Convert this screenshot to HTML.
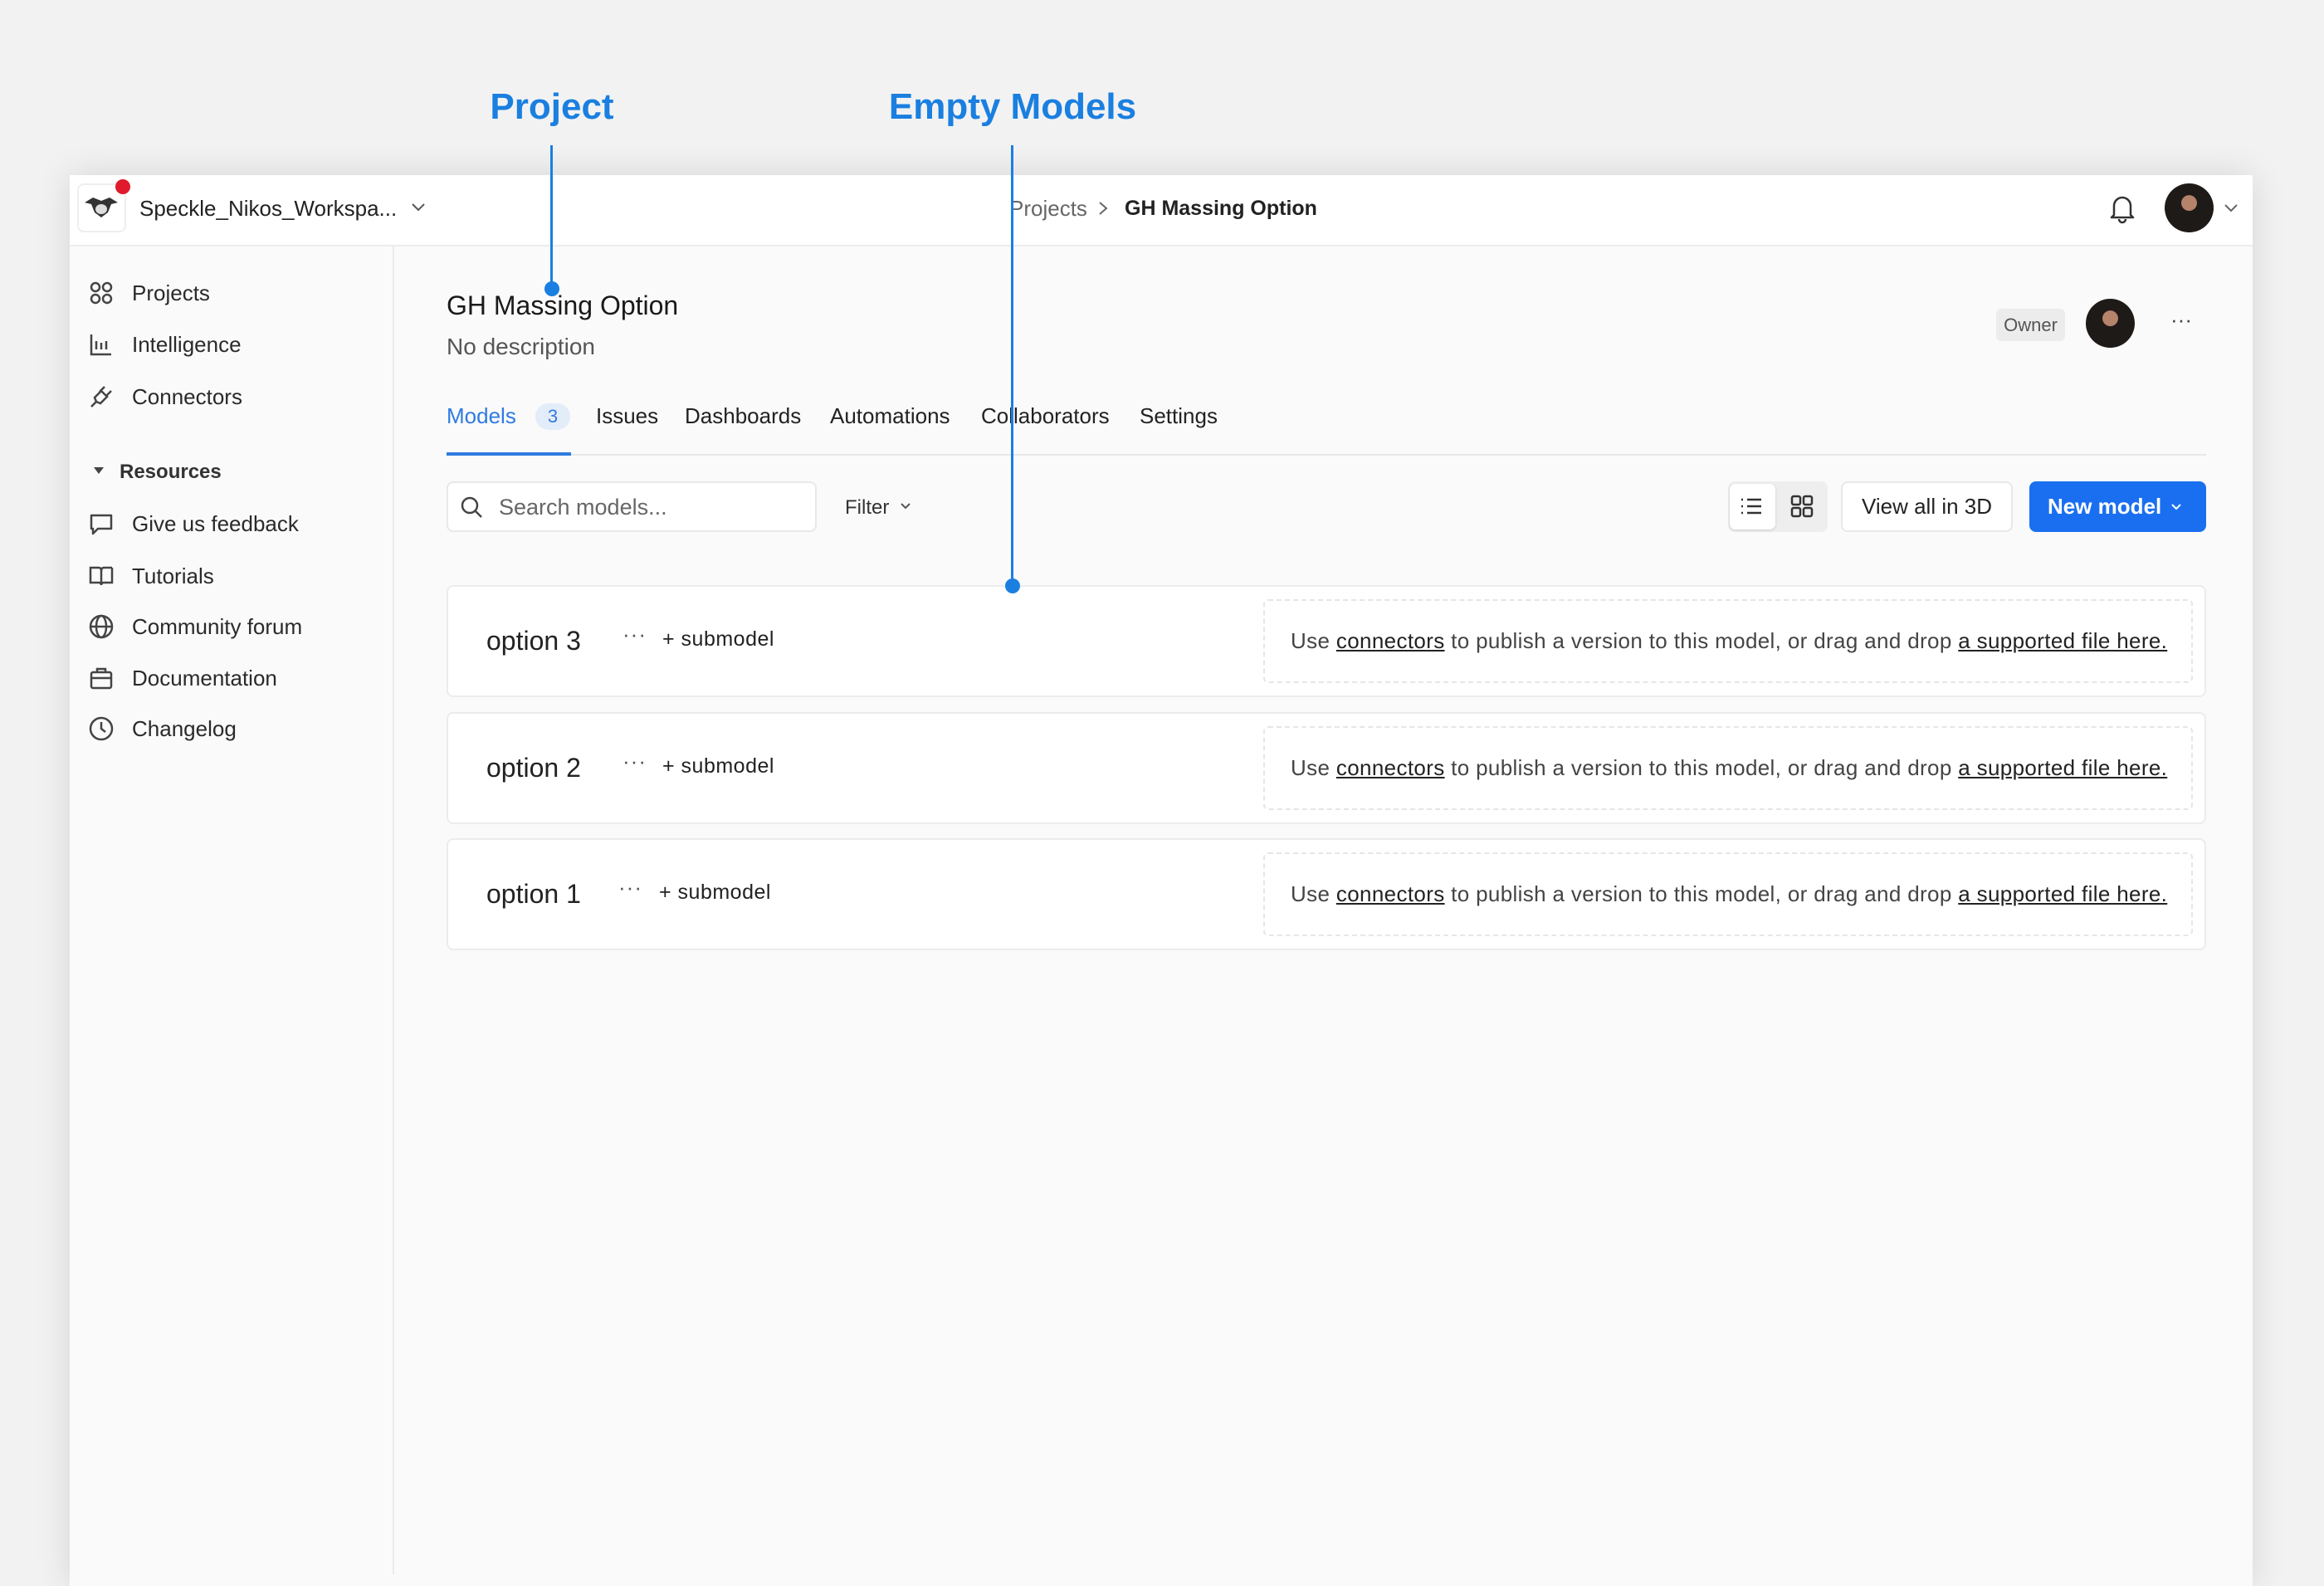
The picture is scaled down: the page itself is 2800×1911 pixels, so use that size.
<!DOCTYPE html>
<html><head><meta charset="utf-8"><style>
*{box-sizing:border-box;margin:0;padding:0}
body{width:2800px;height:1867px;background:#f2f2f2;font-family:"Liberation Sans",sans-serif;position:relative;overflow:hidden;color:#1a1a1a}
.abs{position:absolute}
.win{left:84px;top:211px;width:2630px;height:1700px;background:#fafafa;box-shadow:0 0 40px rgba(0,0,0,.12)}
.hdr{left:84px;top:211px;width:2630px;height:86px;background:#fff;border-bottom:2px solid #ececec}
.side{left:84px;top:297px;width:391px;height:1600px;border-right:2px solid #ececec;background:#fafafa}
.ann{font-size:44px;font-weight:bold;color:#1a7fe0;transform:translateX(-50%);z-index:5}
.vline{width:3px;background:#1a7fe0;z-index:5}
.dot{width:18px;height:18px;border-radius:50%;background:#1a7fe0;z-index:5}
.si{font-size:26px;color:#2a2a2a;left:159px}
.ic{left:106px;width:32px;height:32px}
.tab{font-size:26px;color:#222;top:486px}
.row{left:538px;width:2120px;height:135px;background:#fff;border:2px solid #ececec;border-radius:8px}
.opt{position:absolute;left:46px;font-size:32px;color:#222;top:47px}
.dots{position:absolute;left:210px;top:42px;font-size:26px;color:#555;letter-spacing:1px}
.sub{position:absolute;left:258px;top:49px;font-size:25px;color:#222;letter-spacing:.5px}
.dash{position:absolute;left:982px;top:15px;width:1120px;height:101px;border:2px dashed #e6e6e6;border-radius:6px;font-size:26px;color:#444;line-height:97px;padding-left:31px;letter-spacing:.35px;white-space:nowrap}
.dash u{color:#222}
.av{border-radius:50%;background:radial-gradient(circle at 50% 40%,#b5826a 0 20%,#1e1a18 21% 100%);overflow:hidden}
.av::after{content:"";position:absolute;left:0;top:0;right:0;height:45%;background:transparent}
</style></head><body>
<div class="abs win"></div>
<div class="abs hdr"></div>
<div class="abs side"></div>

<!-- annotations -->
<div class="abs ann" style="left:665px;top:104px">Project</div>
<div class="abs ann" style="left:1220px;top:104px">Empty Models</div>
<div class="abs vline" style="left:663px;top:175px;height:170px"></div>
<div class="abs dot" style="left:656px;top:339px"></div>
<div class="abs vline" style="left:1218px;top:175px;height:530px"></div>
<div class="abs dot" style="left:1211px;top:697px"></div>

<!-- header -->
<div class="abs" style="left:93px;top:221px;width:59px;height:59px;border:2px solid #eee;border-radius:8px;background:#fff"></div>
<svg class="abs" style="left:100px;top:234px" width="44" height="34" viewBox="0 0 44 34"><path d="M2 10 L12 4 L22 8 L32 4 L42 10 L34 12 L30 22 L22 28 L14 22 L10 12 Z" fill="#333"/><ellipse cx="22" cy="18" rx="7" ry="6" fill="#ddd"/></svg>
<div class="abs" style="left:139px;top:216px;width:18px;height:18px;border-radius:50%;background:#e0192c"></div>
<div class="abs" style="left:168px;top:236px;font-size:26px;color:#222">Speckle_Nikos_Workspa...</div>
<svg class="abs" style="left:494px;top:243px" width="20" height="14"><path d="M3 3 L10 10 L17 3" fill="none" stroke="#555" stroke-width="2"/></svg>
<div class="abs" style="left:1216px;top:236px;font-size:26px;color:#666">Projects</div>
<svg class="abs" style="left:1322px;top:242px" width="14" height="18"><path d="M3 2 L11 9 L3 16" fill="none" stroke="#666" stroke-width="2"/></svg>
<div class="abs" style="left:1355px;top:237px;font-size:25px;color:#222;font-weight:bold">GH Massing Option</div>
<svg class="abs" style="left:2540px;top:233px" width="34" height="38" viewBox="0 0 34 38"><path d="M7 26 V15 a10 10 0 0 1 20 0 V26 L30 29 H4 Z M13 31 a4 4 0 0 0 8 0" fill="none" stroke="#333" stroke-width="2.5" stroke-linejoin="round"/></svg>
<div class="abs av" style="left:2608px;top:221px;width:59px;height:59px"></div>
<svg class="abs" style="left:2678px;top:244px" width="20" height="14"><path d="M3 3 L10 10 L17 3" fill="none" stroke="#666" stroke-width="2"/></svg>

<!-- sidebar -->
<svg class="abs ic" style="top:337px" viewBox="0 0 32 32" fill="none" stroke="#444" stroke-width="2.5"><circle cx="9" cy="9" r="5"/><circle cx="23" cy="9" r="5"/><circle cx="9" cy="23" r="5"/><circle cx="23" cy="23" r="5"/></svg>
<div class="abs si" style="top:338px">Projects</div>
<svg class="abs ic" style="top:399px" viewBox="0 0 32 32" fill="none" stroke="#444" stroke-width="2.5"><path d="M4 4 V28 H28 M10 22 V12 M16 22 V14 M22 22 V12"/></svg>
<div class="abs si" style="top:400px">Intelligence</div>
<svg class="abs ic" style="top:461px" viewBox="0 0 32 32" fill="none" stroke="#444" stroke-width="2.5"><path d="M4 29 L10 23 M10 23 L8 18 L16 10 L23 17 L15 25 Z M14 11 L20 5 M22 16 L28 10"/></svg>
<div class="abs si" style="top:463px">Connectors</div>
<svg class="abs" style="left:112px;top:561px" width="14" height="12"><path d="M1 2 H13 L7 10 Z" fill="#444"/></svg>
<div class="abs" style="left:144px;top:555px;font-size:24px;color:#333;font-weight:bold">Resources</div>
<svg class="abs ic" style="top:615px" viewBox="0 0 32 32" fill="none" stroke="#444" stroke-width="2.5"><path d="M4 6 H28 V22 H12 L6 28 V22 H4 Z" stroke-linejoin="round"/></svg>
<div class="abs si" style="top:616px">Give us feedback</div>
<svg class="abs ic" style="top:678px" viewBox="0 0 32 32" fill="none" stroke="#444" stroke-width="2.5"><path d="M3 6 H13 Q16 6 16 10 V27 Q16 24 13 24 H3 Z M29 6 H19 Q16 6 16 10 M29 6 V24 H19 Q16 24 16 27"/></svg>
<div class="abs si" style="top:679px">Tutorials</div>
<svg class="abs ic" style="top:739px" viewBox="0 0 32 32" fill="none" stroke="#444" stroke-width="2.5"><circle cx="16" cy="16" r="13"/><ellipse cx="16" cy="16" rx="6" ry="13"/><path d="M3 16 H29"/></svg>
<div class="abs si" style="top:740px">Community forum</div>
<svg class="abs ic" style="top:801px" viewBox="0 0 32 32" fill="none" stroke="#444" stroke-width="2.5"><rect x="4" y="9" width="24" height="19" rx="2"/><path d="M11 9 V5 H21 V9 M4 16 H28"/></svg>
<div class="abs si" style="top:802px">Documentation</div>
<svg class="abs ic" style="top:862px" viewBox="0 0 32 32" fill="none" stroke="#444" stroke-width="2.5"><circle cx="16" cy="16" r="13"/><path d="M16 8 V16 L21 20"/></svg>
<div class="abs si" style="top:863px">Changelog</div>

<!-- main -->
<div class="abs" style="left:538px;top:350px;font-size:32px;color:#1a1a1a">GH Massing Option</div>
<div class="abs" style="left:538px;top:402px;font-size:28px;color:#555">No description</div>
<div class="abs" style="left:2405px;top:372px;width:83px;height:39px;background:#ececec;border-radius:6px;font-size:22px;color:#555;text-align:center;line-height:39px">Owner</div>
<div class="abs av" style="left:2513px;top:360px;width:59px;height:59px"></div>
<div class="abs" style="left:2615px;top:370px;font-size:26px;color:#444">···</div>

<div class="abs tab" style="left:538px;color:#2f7be0">Models</div>
<div class="abs" style="left:645px;top:486px;width:42px;height:32px;border-radius:16px;background:#e3ecf9;color:#2f7be0;font-size:22px;text-align:center;line-height:32px">3</div>
<div class="abs tab" style="left:718px">Issues</div>
<div class="abs tab" style="left:825px">Dashboards</div>
<div class="abs tab" style="left:1000px">Automations</div>
<div class="abs tab" style="left:1182px">Collaborators</div>
<div class="abs tab" style="left:1373px">Settings</div>
<div class="abs" style="left:538px;top:547px;width:2120px;height:2px;background:#e8e8e8"></div>
<div class="abs" style="left:538px;top:545px;width:150px;height:4px;background:#2f7be0"></div>

<div class="abs" style="left:538px;top:580px;width:446px;height:61px;background:#fff;border:2px solid #e8e8e8;border-radius:8px"></div>
<svg class="abs" style="left:553px;top:596px" width="30" height="30" viewBox="0 0 30 30" fill="none" stroke="#444" stroke-width="2.5"><circle cx="13" cy="13" r="9"/><path d="M20 20 L27 27"/></svg>
<div class="abs" style="left:601px;top:596px;font-size:27px;color:#666">Search models...</div>
<div class="abs" style="left:1018px;top:598px;font-size:24px;color:#333">Filter</div>
<svg class="abs" style="left:1084px;top:605px" width="14" height="10"><path d="M2 2 L7 7 L12 2" fill="none" stroke="#555" stroke-width="2"/></svg>

<div class="abs" style="left:2082px;top:580px;width:120px;height:61px;background:#eee;border-radius:8px"></div>
<div class="abs" style="left:2084px;top:583px;width:55px;height:55px;background:#fff;border-radius:7px;box-shadow:0 1px 3px rgba(0,0,0,.15)"></div>
<svg class="abs" style="left:2096px;top:596px" width="28" height="28" viewBox="0 0 28 28" stroke="#333" stroke-width="2.5"><path d="M9 6 H26 M9 14 H26 M9 22 H26 M2 6 H4 M2 14 H4 M2 22 H4"/></svg>
<svg class="abs" style="left:2157px;top:596px" width="28" height="28" viewBox="0 0 28 28" fill="none" stroke="#333" stroke-width="2.5"><rect x="2" y="2" width="10" height="10" rx="2"/><rect x="16" y="2" width="10" height="10" rx="2"/><rect x="2" y="16" width="10" height="10" rx="2"/><rect x="16" y="16" width="10" height="10" rx="2"/></svg>
<div class="abs" style="left:2218px;top:580px;width:207px;height:61px;background:#fff;border:2px solid #e8e8e8;border-radius:8px;font-size:26px;color:#222;text-align:center;line-height:57px">View all in 3D</div>
<div class="abs" style="left:2445px;top:580px;width:213px;height:61px;background:#1a6ff0;border-radius:8px;font-size:26px;color:#fff;font-weight:bold;line-height:61px;padding-left:22px">New model</div>
<svg class="abs" style="left:2615px;top:606px" width="14" height="10"><path d="M2 2 L7 7 L12 2" fill="none" stroke="#fff" stroke-width="2"/></svg>

<div class="abs row" style="top:705px"><div class="opt">option 3</div><div class="dots">···</div><div class="sub">+ submodel</div><div class="dash">Use <u>connectors</u> to publish a version to this model, or drag and drop <u>a supported file here.</u></div></div>
<div class="abs row" style="top:858px"><div class="opt">option 2</div><div class="dots">···</div><div class="sub">+ submodel</div><div class="dash">Use <u>connectors</u> to publish a version to this model, or drag and drop <u>a supported file here.</u></div></div>
<div class="abs row" style="top:1010px"><div class="opt">option 1</div><div class="dots" style="left:205px">···</div><div class="sub" style="left:254px">+ submodel</div><div class="dash">Use <u>connectors</u> to publish a version to this model, or drag and drop <u>a supported file here.</u></div></div>
</body></html>
